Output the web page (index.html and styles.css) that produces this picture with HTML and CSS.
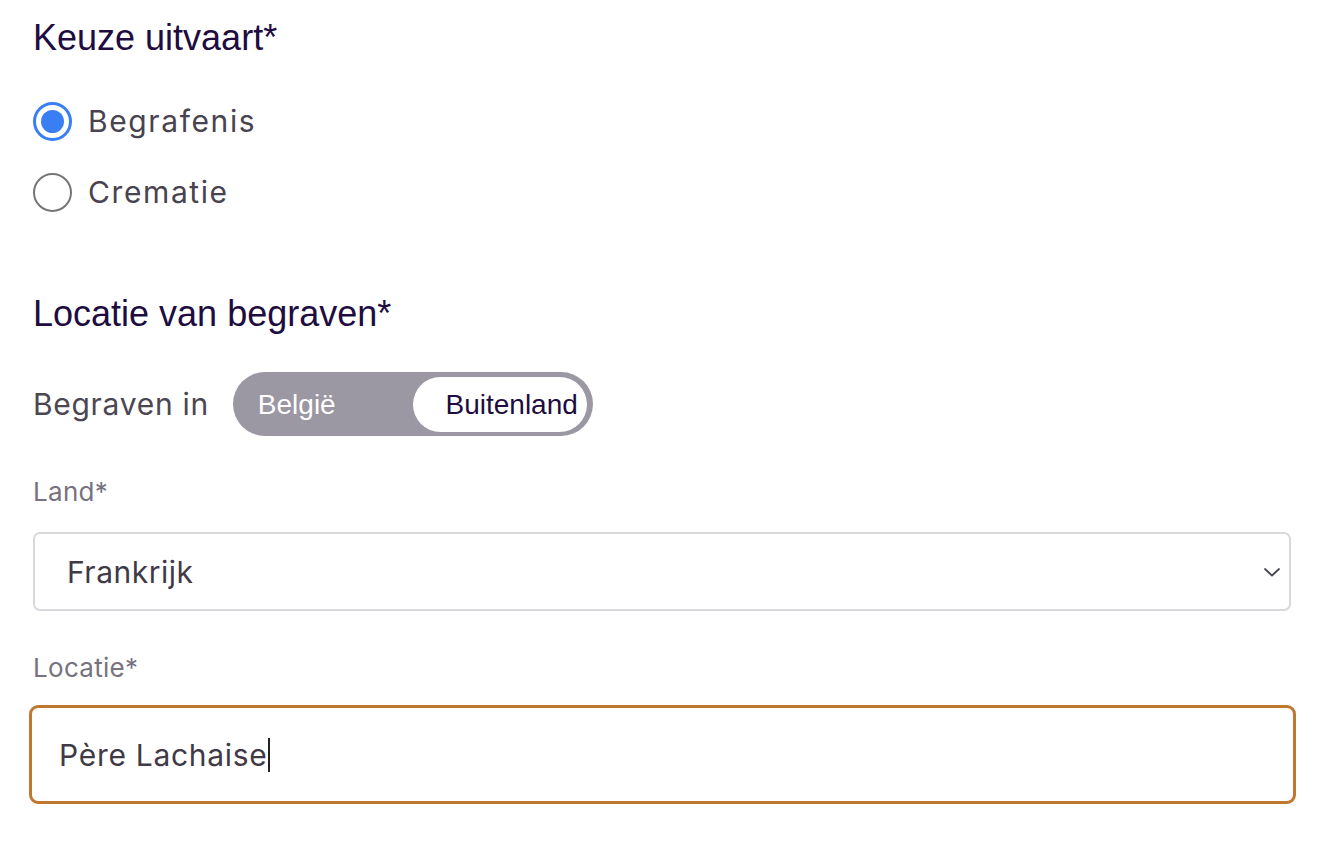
FILE: index.html
```html
<!DOCTYPE html>
<html lang="nl">
<head>
<meta charset="utf-8">
<title>Uitvaart</title>
<link rel="stylesheet" href="styles.css">
</head>
<body>
<main class="form">
  <h2 class="title">Keuze uitvaart*</h2>
  <div class="radios">
    <div class="radio-row">
      <span class="radio checked"><span class="dot"></span></span>
      <span class="radio-label">Begrafenis</span>
    </div>
    <div class="radio-row">
      <span class="radio"></span>
      <span class="radio-label">Crematie</span>
    </div>
  </div>

  <h2 class="title title-2">Locatie van begraven*</h2>
  <div class="toggle-row">
    <span class="toggle-label">Begraven in</span>
    <div class="toggle">
      <span class="opt opt-off">België</span>
      <span class="opt opt-on">Buitenland</span>
    </div>
  </div>

  <div class="field">
    <div class="field-label">Land*</div>
    <div class="select">
      <span class="value">Frankrijk</span>
      <svg class="chevron" width="18" height="12" viewBox="0 0 18 12"><path d="M2 3 L9 9.5 L16 3" fill="none" stroke="#4a4650" stroke-width="1.8" stroke-linecap="round" stroke-linejoin="round"/></svg>
    </div>
  </div>

  <div class="field field-2">
    <div class="field-label">Locatie*</div>
    <div class="input"><span class="value">Père Lachaise</span><span class="caret"></span></div>
  </div>
</main>
</body>
</html>
```

FILE: styles.css
```css
* { box-sizing: border-box; }
html, body { margin: 0; padding: 0; background: #ffffff; }
body { font-family: Inter, "Noto Sans", sans-serif; }

.form {
  padding: 16px 33px 0 33px;
}

.title {
  margin: 0;
  font-family: "Liberation Sans", Arial, sans-serif;
  font-weight: 400;
  font-size: 36px;
  line-height: 44px;
  color: #200c3f;
}

.radios {
  margin-top: 41px;
  display: flex;
  flex-direction: column;
  gap: 31px;
}

.radio-row {
  display: flex;
  align-items: center;
  height: 40px;
  gap: 16px;
}

.radio {
  width: 39px;
  height: 39px;
  border-radius: 50%;
  border: 2px solid #767676;
  display: flex;
  align-items: center;
  justify-content: center;
  flex: none;
}

.radio.checked {
  border: 3px solid #3a7ef6;
}

.radio .dot {
  width: 23px;
  height: 23px;
  border-radius: 50%;
  background: #3a7ef6;
}

.radio-label {
  font-size: 30px;
  color: #48434f;
  letter-spacing: 1.6px;
}

.title-2 {
  margin-top: 80px;
}

.toggle-row {
  margin-top: 36px;
  display: flex;
  align-items: center;
  gap: 24px;
}

.toggle-label {
  font-size: 30px;
  color: #4b4752;
  letter-spacing: 0.7px;
}

.toggle {
  width: 360px;
  height: 64px;
  border-radius: 32px;
  background: #9b97a3;
  display: flex;
  align-items: center;
  justify-content: space-between;
  padding: 5px 6px 4px 25px;
  font-family: "Liberation Sans", Arial, sans-serif;
  font-size: 28px;
}

.opt-off {
  color: #ffffff;
}

.opt-on {
  height: 55px;
  width: 174px;
  border-radius: 28px;
  background: #ffffff;
  color: #200c3f;
  display: flex;
  align-items: center;
  justify-content: flex-end;
  padding-right: 9px;
}

.field {
  margin-top: 40px;
}

.field-2 {
  margin-top: 41px;
}

.field-label {
  font-size: 26px;
  line-height: 32px;
  color: #77727e;
  letter-spacing: 0.3px;
}

.select {
  margin-top: 24px;
  height: 79px;
  border: 2px solid #d9d8dc;
  border-radius: 7px;
  display: flex;
  align-items: center;
  justify-content: space-between;
  padding: 0 8px 0 32px;
}

.value {
  font-size: 30px;
  color: #3f3a45;
  letter-spacing: 0.5px;
}

.chevron {
  display: block;
}

.input {
  margin: 21px -5px 0 -4px;
  height: 99px;
  border: 3px solid #c07830;
  border-radius: 9px;
  display: flex;
  align-items: center;
  padding: 0 0 0 27px;
}

.input .value {
  letter-spacing: 0.7px;
}

.caret {
  width: 2px;
  height: 34px;
  background: #222;
  margin-left: 1px;
}
```
